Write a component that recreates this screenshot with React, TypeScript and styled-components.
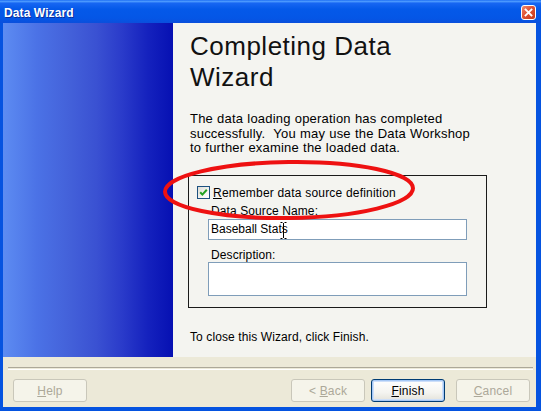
import React from "react";
import styled, { createGlobalStyle } from "styled-components";

const GlobalStyle = createGlobalStyle`
  html, body { margin: 0; padding: 0; background: #ffffff; }
  body { font-family: "Liberation Sans", Arial, sans-serif; }
`;

const Window = styled.div`
  position: relative;
  width: 541px;
  height: 411px;
  box-sizing: border-box;
  background: #0553e0;
  display: flex;
  flex-direction: column;
  overflow: hidden;
`;

const TitleBar = styled.div`
  height: 23px;
  flex: none;
  display: flex;
  align-items: center;
  justify-content: space-between;
  padding: 0 5px 0 4px;
  background: linear-gradient(
    to bottom,
    #1b6cf3 0%,
    #4d9bff 6%,
    #1766f2 14%,
    #0459e9 40%,
    #0456e6 80%,
    #0a4fdc 100%
  );
`;

const TitleText = styled.span`
  color: #ffffff;
  font-family: "Liberation Sans", Arial, sans-serif;
  font-weight: bold;
  font-size: 12px;
  letter-spacing: 0.1px;
  text-shadow: 1px 1px 0 #0b2f9a;
  margin-top: 2px;
`;

const CloseButton = styled.div`
  width: 13px;
  height: 13px;
  border: 1px solid #ffffff;
  border-radius: 3px;
  background: linear-gradient(135deg, #f08a6d 0%, #de5233 45%, #c43a1c 100%);
  display: flex;
  align-items: center;
  justify-content: center;
  margin-top: 1px;
`;

const Body = styled.div`
  flex: none;
  height: 334px;
  display: flex;
  margin: 0 5px 0 3px;
`;

const SidePanel = styled.div`
  width: 170px;
  flex: none;
  background: linear-gradient(
    to right,
    #5d8cf2 0%,
    #4b72e6 20%,
    #4462da 38%,
    #3a51d2 55%,
    #2a3bca 70%,
    #1522be 85%,
    #0610b2 100%
  );
`;

const MainPanel = styled.div`
  flex: 1;
  background: #f4f4f0;
  display: flex;
  flex-direction: column;
  padding: 8px 0 0 17px;
  color: #000000;
`;

const Heading = styled.h1`
  margin: 0;
  font-family: "Liberation Sans", Arial, sans-serif;
  font-weight: normal;
  font-size: 26px;
  letter-spacing: 0.5px;
  line-height: 31px;
  color: #111111;
  width: 250px;
`;

const Paragraph = styled.p`
  margin: 19px 0 0 0;
  font-size: 13px;
  letter-spacing: 0.2px;
  word-spacing: 0.3px;
  line-height: 14.5px;
  width: 300px;
  white-space: pre-line;
`;

const GroupBox = styled.div`
  margin: 19px 0 0 -2px;
  width: 299px;
  height: 133px;
  box-sizing: border-box;
  border: 1px solid #1a1a1a;
  padding: 10px 19px 0 19px;
  display: flex;
  flex-direction: column;
`;

const CheckRow = styled.label`
  display: flex;
  align-items: center;
  gap: 3px;
  margin-left: -11px;
  height: 14px;
  font-size: 12px;
  letter-spacing: 0.2px;
`;

const CheckBox = styled.span`
  width: 11px;
  height: 11px;
  border: 1px solid #1c5180;
  background: linear-gradient(135deg, #dcdcd6 0%, #f4f4f0 60%, #ffffff 100%);
  display: flex;
  align-items: center;
  justify-content: center;
  flex: none;
`;

const FieldLabel = styled.div<{ $gap: number }>`
  font-size: 12px;
  line-height: 14px;
  letter-spacing: 0.1px;
  margin-top: ${(p) => p.$gap}px;
  padding-left: 3px;
`;

const TextField = styled.div<{ $h: number; $gap: number }>`
  height: ${(p) => p.$h}px;
  margin-top: ${(p) => p.$gap}px;
  box-sizing: border-box;
  border: 1px solid #7f9db9;
  background: #ffffff;
  font-size: 12px;
  padding-left: 2px;
  display: flex;
  align-items: flex-start;
`;

const FieldText = styled.span`
  line-height: 19px;
`;

const NoteText = styled.p`
  margin: 22px 0 0 0;
  font-size: 12px;
  line-height: 14px;
  letter-spacing: 0.1px;
`;

const Footer = styled.div`
  flex: none;
  height: 50px;
  margin: 0 5px 0 3px;
  background: #ece9d8;
  display: flex;
  flex-direction: column;
  padding-top: 10px;
  box-sizing: border-box;
`;

const Separator = styled.div`
  margin: 0 3px 0 5px;
  height: 1px;
  border-top: 1px solid #aca899;
  border-bottom: 1px solid #ffffff;
`;

const ButtonRow = styled.div`
  display: flex;
  margin-top: 9px;
  padding: 0 6px 0 10px;
`;

const Button = styled.div<{ $disabled?: boolean; $default?: boolean; $gapLeft?: number }>`
  width: 74px;
  height: 23px;
  box-sizing: border-box;
  margin-left: ${(p) => p.$gapLeft ?? 0}px;
  border: 1px solid ${(p) => (p.$disabled ? "#c9c7ba" : "#003c74")};
  border-radius: 3px;
  background: ${(p) =>
    p.$disabled
      ? "#f5f4ea"
      : "linear-gradient(to bottom, #ffffff 0%, #f4f4f0 60%, #e3e2da 100%)"};
  box-shadow: ${(p) =>
    p.$default ? "inset 0 0 0 1px #a6c8f5, inset 0 0 0 2px #cddff9" : "none"};
  color: ${(p) => (p.$disabled ? "#aca899" : "#000000")};
  font-size: 12px;
  letter-spacing: 0.2px;
  display: flex;
  align-items: center;
  justify-content: center;
`;

const Spacer = styled.div`
  flex: 1;
`;

const Mnemonic = styled.span`
  text-decoration: underline;
  text-underline-offset: 1px;
`;

const Annotation = styled.svg`
  position: absolute;
  left: 160px;
  top: 157px;
  pointer-events: none;
`;

const Cursor = styled.svg`
  position: absolute;
  left: 280px;
  top: 222px;
  pointer-events: none;
`;

export default function App() {
  return (
    <>
      <GlobalStyle />
      <Window>
        <TitleBar>
          <TitleText>Data Wizard</TitleText>
          <CloseButton>
            <svg width="9" height="9" viewBox="0 0 9 9">
              <path d="M1.5 1.5 L7.5 7.5 M7.5 1.5 L1.5 7.5" stroke="#ffffff" strokeWidth="1.8" strokeLinecap="square" />
            </svg>
          </CloseButton>
        </TitleBar>
        <Body>
          <SidePanel />
          <MainPanel>
            <Heading>Completing Data Wizard</Heading>
            <Paragraph>
              {"The data loading operation has completed\nsuccessfully.\u00a0 You may use the Data Workshop\nto further examine the loaded data."}
            </Paragraph>
            <GroupBox>
              <CheckRow>
                <CheckBox>
                  <svg width="9" height="9" viewBox="0 0 9 9">
                    <path d="M1.2 4.2 L3.4 6.6 L7.8 1.8" fill="none" stroke="#21a121" strokeWidth="2" />
                  </svg>
                </CheckBox>
                <span>
                  <Mnemonic>R</Mnemonic>emember data source definition
                </span>
              </CheckRow>
              <FieldLabel $gap={4}>Data Source Name:</FieldLabel>
              <TextField $h={21} $gap={1}>
                <FieldText>Baseball Stats</FieldText>
              </TextField>
              <FieldLabel $gap={8}>Description:</FieldLabel>
              <TextField $h={34} $gap={0} />
            </GroupBox>
            <NoteText>To close this Wizard, click Finish.</NoteText>
          </MainPanel>
        </Body>
        <Footer>
          <Separator />
          <ButtonRow>
            <Button $disabled>
              <span>
                <Mnemonic>H</Mnemonic>elp
              </span>
            </Button>
            <Spacer />
            <Button $disabled>
              <span>
                &lt; <Mnemonic>B</Mnemonic>ack
              </span>
            </Button>
            <Button $default $gapLeft={6}>
              <span>
                <Mnemonic>F</Mnemonic>inish
              </span>
            </Button>
            <Button $disabled $gapLeft={11}>
              <span>
                <Mnemonic>C</Mnemonic>ancel
              </span>
            </Button>
          </ButtonRow>
        </Footer>
        <Annotation width="262" height="66" viewBox="0 0 262 66">
          <ellipse cx="129" cy="33" rx="124" ry="28" fill="none" stroke="#ee1111" strokeWidth="4" transform="rotate(-0.8 129 33)" />
        </Annotation>
        <Cursor width="7" height="17" viewBox="0 0 7 17">
          <path d="M0.5 0.5 H2.5 M4.5 0.5 H6.5 M3.5 1 V16 M0.5 16.5 H2.5 M4.5 16.5 H6.5" stroke="#000000" strokeWidth="1" fill="none" />
        </Cursor>
      </Window>
    </>
  );
}
